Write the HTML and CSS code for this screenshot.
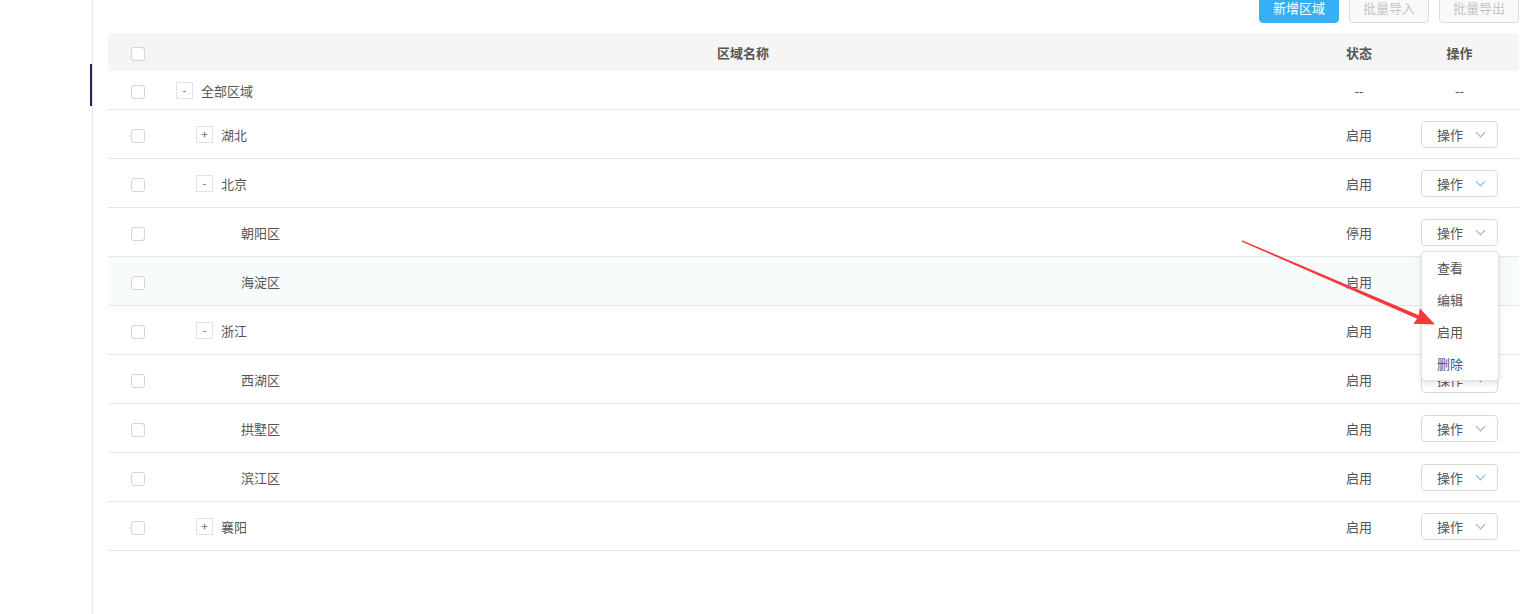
FILE: index.html
```html
<!DOCTYPE html>
<html lang="zh-CN">
<head>
    <meta charset="UTF-8">
    <title>区域管理</title>
    <link rel="stylesheet" href="styles.css">
</head>
<body>
    <div class="layout">
        <aside class="sidebar">
            <div class="nav-item active"></div>
        </aside>

        <main class="main">
            <div class="toolbar">
                <button class="btn btn-primary">新增区域</button>
                <button class="btn btn-disabled">批量导入</button>
                <button class="btn btn-disabled">批量导出</button>
            </div>

            <table class="area-table">
                <colgroup>
                    <col class="col-check">
                    <col>
                    <col class="col-status">
                    <col class="col-ops">
                </colgroup>
                <thead>
                    <tr>
                        <th><span class="checkbox"></span></th>
                        <th>区域名称</th>
                        <th>状态</th>
                        <th>操作</th>
                    </tr>
                </thead>
                <tbody>
                    <tr class="row-root">
                        <td><span class="checkbox"></span></td>
                        <td><div class="tree-cell"><span class="toggle">-</span>全部区域</div></td>
                        <td>--</td>
                        <td>--</td>
                    </tr>
                    <tr>
                        <td><span class="checkbox"></span></td>
                        <td><div class="tree-cell lv1"><span class="toggle">+</span>湖北</div></td>
                        <td>启用</td>
                        <td><button class="op-btn">操作<span class="chev"></span></button></td>
                    </tr>
                    <tr>
                        <td><span class="checkbox"></span></td>
                        <td><div class="tree-cell lv1"><span class="toggle">-</span>北京</div></td>
                        <td>启用</td>
                        <td><button class="op-btn">操作<span class="chev blue"></span></button></td>
                    </tr>
                    <tr>
                        <td><span class="checkbox"></span></td>
                        <td><div class="tree-cell lv2">朝阳区</div></td>
                        <td>停用</td>
                        <td>
                            <div class="op-wrap">
                                <button class="op-btn">操作<span class="chev"></span></button>
                                <ul class="dropdown">
                                    <li>查看</li>
                                    <li>编辑</li>
                                    <li>启用</li>
                                    <li class="hover">删除</li>
                                </ul>
                            </div>
                        </td>
                    </tr>
                    <tr class="row-hover">
                        <td><span class="checkbox"></span></td>
                        <td><div class="tree-cell lv2">海淀区</div></td>
                        <td>启用</td>
                        <td><button class="op-btn">操作<span class="chev"></span></button></td>
                    </tr>
                    <tr>
                        <td><span class="checkbox"></span></td>
                        <td><div class="tree-cell lv1"><span class="toggle">-</span>浙江</div></td>
                        <td>启用</td>
                        <td><button class="op-btn">操作<span class="chev"></span></button></td>
                    </tr>
                    <tr>
                        <td><span class="checkbox"></span></td>
                        <td><div class="tree-cell lv2">西湖区</div></td>
                        <td>启用</td>
                        <td><button class="op-btn">操作<span class="chev"></span></button></td>
                    </tr>
                    <tr>
                        <td><span class="checkbox"></span></td>
                        <td><div class="tree-cell lv2">拱墅区</div></td>
                        <td>启用</td>
                        <td><button class="op-btn">操作<span class="chev"></span></button></td>
                    </tr>
                    <tr>
                        <td><span class="checkbox"></span></td>
                        <td><div class="tree-cell lv2">滨江区</div></td>
                        <td>启用</td>
                        <td><button class="op-btn">操作<span class="chev blue"></span></button></td>
                    </tr>
                    <tr>
                        <td><span class="checkbox"></span></td>
                        <td><div class="tree-cell lv1"><span class="toggle">+</span>襄阳</div></td>
                        <td>启用</td>
                        <td><button class="op-btn">操作<span class="chev"></span></button></td>
                    </tr>
                </tbody>
            </table>
        </main>
    </div>

    <!-- annotation arrow -->
    <svg class="annotation" width="1526" height="614" viewBox="0 0 1526 614">
        <polygon fill="#f5393a"
            points="1242,240.3 1418.8,315.2 1419.8,308.3 1435,324.5 1413.2,323.8 1417.2,318.8 1242,241.7"/>
    </svg>
</body>
</html>
```

FILE: styles.css
```css
body {
    margin: 0;
    font-family: "Noto Sans CJK SC", "Noto Sans", "Liberation Sans", sans-serif;
    font-size: 13px;
    color: #555;
    background: #fff;
    overflow: hidden;
}

.layout {
    display: flex;
    height: 614px;
}

/* Left menu strip */
.sidebar {
    width: 93px;
    flex-shrink: 0;
    box-sizing: border-box;
    border-right: 1px solid #e8e8e8;
}

.nav-item {
    margin-top: 64px;
    height: 42px;
}

.nav-item.active {
    border-right: 2px solid #1c2d55;
}

.main {
    flex: 1;
    padding: 0 7px 0 15px;
}

/* Buttons above the table (page is scrolled a little) */
.toolbar {
    display: flex;
    justify-content: flex-end;
    gap: 10px;
    margin-top: -9px;
}

.btn {
    width: 80px;
    height: 32px;
    border-radius: 4px;
    font-family: inherit;
    font-size: 13px;
    padding: 0;
}

.btn-primary {
    background: #35b0f4;
    border: 1px solid #35b0f4;
    color: #fff;
}

.btn-disabled {
    background: #f9f9f9;
    border: 1px solid #dcdcdc;
    color: #c5c5c5;
}

/* Table */
.area-table {
    width: 100%;
    margin-top: 10px;
    border-collapse: collapse;
    table-layout: fixed;
}

.col-check { width: 60px; }
.col-status { width: 82px; }
.col-ops { width: 119px; }

.area-table th {
    height: 38px;
    padding: 0;
    background: #f5f5f5;
    font-weight: bold;
    color: #555;
    text-align: center;
}

.area-table th:first-child { border-top-left-radius: 4px; }
.area-table th:last-child { border-top-right-radius: 4px; }

.area-table td {
    height: 48px;
    padding: 0;
    border-bottom: 1px solid #e6e6e6;
    text-align: center;
}

.area-table .row-root td {
    height: 38px;
}

.area-table td:nth-child(2) {
    text-align: left;
}

.row-hover td {
    background: #f7fbfc;
}

.checkbox {
    display: inline-block;
    width: 12px;
    height: 12px;
    border: 1px solid #d4d4d4;
    border-radius: 3px;
    background: #fff;
    vertical-align: middle;
}

/* Tree column */
.tree-cell {
    display: flex;
    align-items: center;
    gap: 8px;
    padding-left: 8px;
}

.tree-cell.lv1 { padding-left: 28px; }
.tree-cell.lv2 { padding-left: 73px; }

.toggle {
    width: 15px;
    height: 15px;
    border: 1px solid #e2e2e2;
    display: flex;
    align-items: center;
    justify-content: center;
    font-size: 11px;
    color: #666;
    line-height: 1;
}

/* Operation dropdown */
.op-wrap {
    position: relative;
    display: inline-block;
    vertical-align: middle;
}

.op-btn {
    width: 77px;
    height: 27px;
    display: inline-flex;
    align-items: center;
    padding: 0 0 0 15px;
    background: #fff;
    border: 1px solid #dadada;
    border-radius: 4px;
    font-family: inherit;
    font-size: 13px;
    color: #555;
    vertical-align: middle;
}

.chev {
    width: 6px;
    height: 6px;
    margin: -4px 0 0 14px;
    border-right: 1px solid #aaa;
    border-bottom: 1px solid #aaa;
    transform: rotate(45deg);
}

.chev.blue {
    border-color: #7fb2e5;
}

.dropdown {
    position: absolute;
    top: 32px;
    left: 0;
    z-index: 10;
    width: 76px;
    margin: 0;
    padding: 0;
    list-style: none;
    background: #fff;
    border: 1px solid #e2e2e2;
    border-radius: 4px;
    box-shadow: 0 2px 6px rgba(0, 0, 0, 0.12);
    text-align: left;
}

.dropdown li {
    height: 32px;
    line-height: 32px;
    padding-left: 15px;
    color: #555;
}

.dropdown li.hover {
    color: #33569a;
}

.annotation {
    position: fixed;
    left: 0;
    top: 0;
    z-index: 20;
    pointer-events: none;
}
```
